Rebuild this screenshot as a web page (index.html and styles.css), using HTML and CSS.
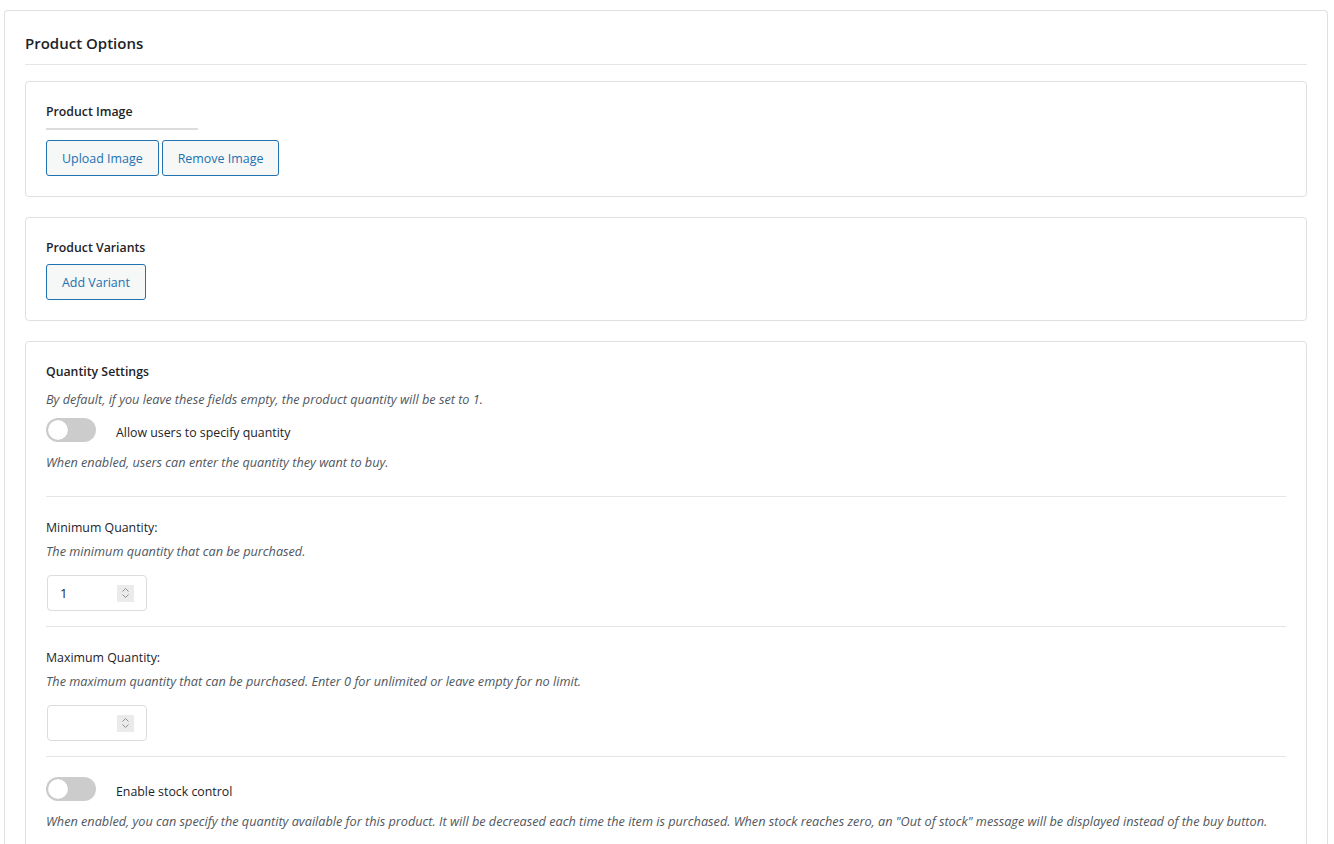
FILE: index.html
```html
<!DOCTYPE html>
<html lang="en">
<head>
<meta charset="utf-8">
<title>Product Options</title>
<link rel="stylesheet" href="styles.css">
</head>
<body>
<div class="card">
  <h2 class="card-title">Product Options</h2>

  <section class="box">
    <h3 class="box-title underline">Product Image</h3>
    <div class="btn-row">
      <button class="btn">Upload Image</button>
      <button class="btn">Remove Image</button>
    </div>
  </section>

  <section class="box">
    <h3 class="box-title">Product Variants</h3>
    <div class="btn-row tight">
      <button class="btn">Add Variant</button>
    </div>
  </section>

  <section class="box qty">
    <h3 class="box-title">Quantity Settings</h3>
    <p class="desc first">By default, if you leave these fields empty, the product quantity will be set to 1.</p>
    <div class="field toggle-field">
      <label class="toggle-row">
        <span class="toggle"><span class="knob"></span></span>
        <span class="toggle-label">Allow users to specify quantity</span>
      </label>
      <p class="desc">When enabled, users can enter the quantity they want to buy.</p>
    </div>
    <div class="field input-field">
      <div class="field-label">Minimum Quantity:</div>
      <p class="desc">The minimum quantity that can be purchased.</p>
      <div class="num"><span class="num-val">1</span><span class="spin"><svg width="9" height="12" viewBox="0 0 9 12"><path d="M1.5 4.5 L4.5 1.5 L7.5 4.5" fill="none" stroke="#8c8f94" stroke-width="1"/><path d="M1.5 7.5 L4.5 10.5 L7.5 7.5" fill="none" stroke="#8c8f94" stroke-width="1"/></svg></span></div>
    </div>
    <div class="field input-field">
      <div class="field-label">Maximum Quantity:</div>
      <p class="desc">The maximum quantity that can be purchased. Enter 0 for unlimited or leave empty for no limit.</p>
      <div class="num"><span class="num-val"></span><span class="spin"><svg width="9" height="12" viewBox="0 0 9 12"><path d="M1.5 4.5 L4.5 1.5 L7.5 4.5" fill="none" stroke="#8c8f94" stroke-width="1"/><path d="M1.5 7.5 L4.5 10.5 L7.5 7.5" fill="none" stroke="#8c8f94" stroke-width="1"/></svg></span></div>
    </div>
    <div class="field last">
      <label class="toggle-row">
        <span class="toggle"><span class="knob"></span></span>
        <span class="toggle-label">Enable stock control</span>
      </label>
      <p class="desc">When enabled, you can specify the quantity available for this product. It will be decreased each time the item is purchased. When stock reaches zero, an "Out of stock" message will be displayed instead of the buy button.</p>
    </div>
  </section>
</div>
</body>
</html>
```

FILE: styles.css
```css
* { box-sizing: border-box; }
html, body { margin: 0; padding: 0; background: #fff; }
body {
  font-family: "Open Sans", "Noto Sans", sans-serif;
  font-size: 13px;
  color: #1d2327;
  padding: 10px 6px 0 4px;
}
.card {
  border: 1px solid #e0e0e0;
  border-radius: 4px;
  border-bottom: none;
  padding: 20px 20px 0 20px;
  background: #fff;
}
.card-title {
  margin: 0;
  font-size: 15px;
  font-weight: 600;
  line-height: 24px;
  padding-bottom: 9px;
  border-bottom: 1px solid #e5e5e5;
  margin-bottom: 16px;
}
.box {
  border: 1px solid #e0e0e0;
  border-radius: 4px;
  padding: 20px;
  margin-bottom: 20px;
}
.box-title {
  margin: 0;
  font-size: 12.3px;
  font-weight: 600;
  line-height: 20px;
}
.box-title.underline {
  width: 152px;
  padding-bottom: 6px;
  border-bottom: 2px solid #dcdcde;
  margin-bottom: 10px;
}
.btn-row { display: flex; gap: 3px; }
.btn-row.tight { margin-top: 6px; }
.btn {
  font-family: inherit;
  font-size: 12.45px;
  color: #2271b1;
  background: #f6f7f7;
  border: 1px solid #2271b1;
  border-radius: 3px;
  height: 36px;
  padding: 0 15px;
  cursor: pointer;
}
.box.qty { padding-bottom: 30px; }
.desc {
  margin: 0;
  font-size: 12.7px;
  font-style: italic;
  color: #50575e;
  line-height: 18px;
}
.desc.first { margin-top: 8px; }
.field {
  border-bottom: 1px solid #e5e5e5;
}
.toggle-field { padding-bottom: 25px; }
.input-field { padding-top: 22px; padding-bottom: 15px; }
.field.last { border-bottom: none; padding-top: 20px; }
.toggle-row {
  display: flex;
  align-items: center;
  gap: 20px;
  height: 24px;
  margin-bottom: 11px;
}
.toggle-field .toggle-row { margin-top: 10px; }
.toggle {
  position: relative;
  width: 50px;
  height: 24px;
  border-radius: 12px;
  background: #cccccc;
  flex: none;
}
.knob {
  position: absolute;
  left: 2px;
  top: 2px;
  width: 20px;
  height: 20px;
  border-radius: 50%;
  background: #fff;
  box-shadow: 0 0 1px rgba(0,0,0,0.15);
}
.toggle-label { font-size: 12.35px; color: #1d2327; padding-top: 5px; }
.field-label { font-size: 12.35px; line-height: 18px; margin-bottom: 5px; color: #1d2327; }
.num {
  margin-top: 15px;
  margin-left: 1px;
  width: 100px;
  height: 36px;
  border: 1px solid #dcdcde;
  border-radius: 4px;
  display: flex;
  align-items: center;
  padding: 0 12px 0 12px;
  font-size: 13px;
  color: #1d2327;
}
.num-val { flex: 1; }
.spin {
  width: 17px;
  height: 17px;
  background: #ebebeb;
  display: flex;
  align-items: center;
  justify-content: center;
}
```
